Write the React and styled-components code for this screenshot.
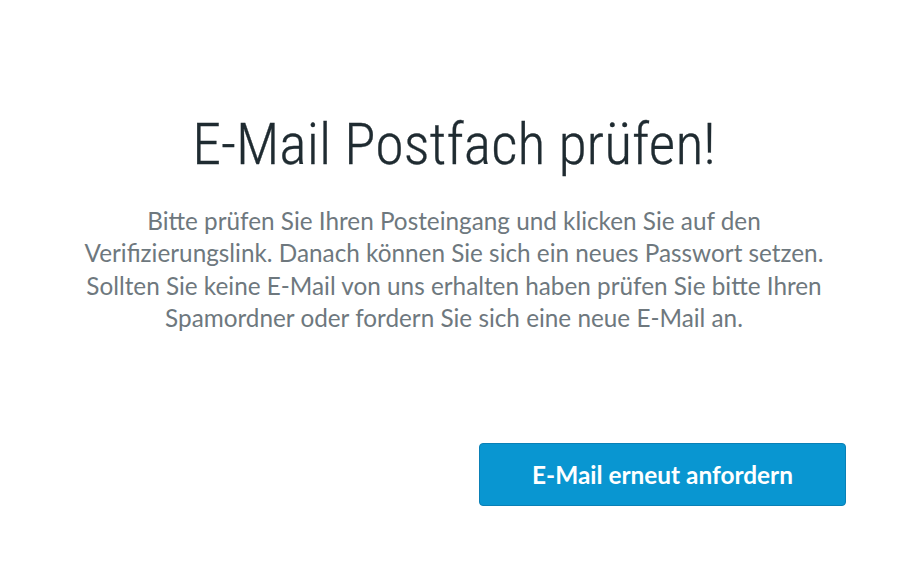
import React from 'react';
import styled, { createGlobalStyle } from 'styled-components';

const GlobalStyle = createGlobalStyle`
  html, body {
    margin: 0;
    padding: 0;
    background: #fff;
  }
  * { box-sizing: border-box; }
`;

const Page = styled.main`
  width: 908px;
  min-height: 566px;
  padding: 106px 62px 0;
  display: flex;
  flex-direction: column;
  align-items: center;
`;

const Title = styled.h1`
  margin: 0;
  font-family: "Roboto Condensed", "DejaVu Sans Condensed", sans-serif;
  font-weight: 300;
  font-size: 58px;
  line-height: 76px;
  color: #1f2b31;
  text-align: center;
  -webkit-text-stroke: 0.3px #1f2b31;
`;

const Text = styled.p`
  margin: 23px 0 0;
  font-family: Lato, "Open Sans", sans-serif;
  font-size: 24.3px;
  line-height: 32.4px;
  color: #6e787e;
  text-align: center;
`;

const Actions = styled.div`
  align-self: stretch;
  display: flex;
  justify-content: flex-end;
  margin-top: 108px;
`;

const Button = styled.button`
  width: 367px;
  height: 63px;
  border: 1px solid #0a80b6;
  border-radius: 4px;
  background: #0996d1;
  color: #fff;
  font-family: Lato, "Open Sans", sans-serif;
  font-weight: 700;
  font-size: 24.4px;
  cursor: pointer;
`;

export default function App() {
  return (
    <>
      <GlobalStyle />
      <Page>
        <Title>E-Mail Postfach prüfen!</Title>
        <Text>
          Bitte prüfen Sie Ihren Posteingang und klicken Sie auf den<br />
          Verifizierungslink. Danach können Sie sich ein neues Passwort setzen.<br />
          Sollten Sie keine E-Mail von uns erhalten haben prüfen Sie bitte Ihren<br />
          Spamordner oder fordern Sie sich eine neue E-Mail an.
        </Text>
        <Actions>
          <Button type="button">E-Mail erneut anfordern</Button>
        </Actions>
      </Page>
    </>
  );
}
